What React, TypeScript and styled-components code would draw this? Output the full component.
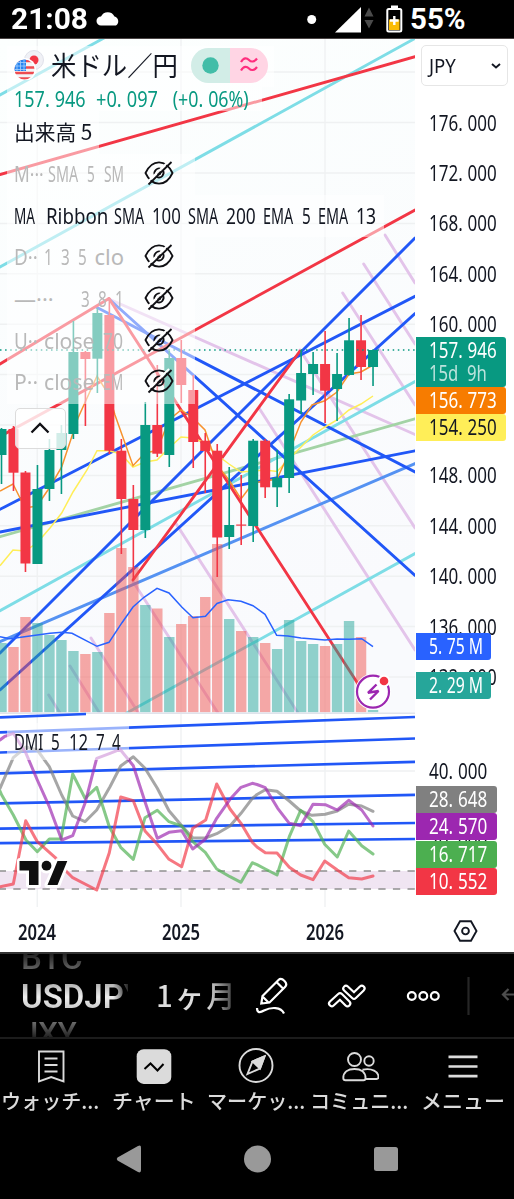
import React, { useLayoutEffect, useRef, useState } from 'react'
import styled, { createGlobalStyle } from 'styled-components'

const GlobalStyle = createGlobalStyle`
    body {
        margin: 0;
        background: #000000;
    }
    * {
        box-sizing: border-box;
    }
`;

const latin = `'Noto Sans', 'Noto Sans CJK JP', sans-serif`;
const japanese = `'Noto Sans CJK JP', sans-serif`;

/* ---------- condensed text ---------- */

const FitBox = styled.span<{ $width: number }>`
    display: inline-block;
    width: ${p => p.$width}px;
    flex-shrink: 0;
    white-space: pre;
    text-align: left;
`;

const FitInner = styled.span`
    display: inline-block;
    transform-origin: 0 50%;
`;

const Point = styled.span`
    margin-right: 0.28em;
`;

const spaced = (text: string) =>
    text.split(/(\.)(?=\d)/).map((part, i) => part === '.' ? <Point key={i}>.</Point> : part);

const Fit: React.FC<{ width: number; children: string; className?: string; raw?: boolean }> = ({ width, children, className, raw }) => {
    const ref = useRef<HTMLSpanElement>(null);
    const [scale, setScale] = useState(1);

    useLayoutEffect(() => {
        if (ref.current && ref.current.offsetWidth > 0) {
            setScale(width / ref.current.offsetWidth);
        }
    }, [width, children]);

    return (
        <FitBox $width={width} className={className}>
            <FitInner ref={ref} style={{ transform: `scaleX(${scale})` }}>{raw ? children : spaced(children)}</FitInner>
        </FitBox>
    )
}

/* ---------- layout ---------- */

const Screen = styled.div`
    display: flex;
    flex-direction: column;
    width: 514px;
    height: 1199px;
    overflow: hidden;
    background: #000000;
    font-family: ${latin};
`;

const StatusBar = styled.header`
    display: flex;
    align-items: center;
    height: 39px;
    padding: 0 48px 0 11px;
    color: #ffffff;
    font-family: Roboto, sans-serif;
    font-weight: 700;
    font-size: 29.5px;
    line-height: 38px;
    border-bottom: 1px solid #4a4444;
`;

const StatusIcons = styled.svg`
    display: block;
    margin-left: auto;
    margin-right: 7px;
`;

const Cloud = styled.svg`
    margin: 0 0 2px 8px;
`;

const ChartArea = styled.main`
    position: relative;
    display: grid;
    grid-template-columns: 415px 99px;
    grid-template-rows: 869px 44px;
    height: 913px;
    background: #ffffff;
`;

const Plot = styled.svg`
    display: block;
`;

const Legend = styled.section`
    position: absolute;
    left: 7px;
    top: 7px;
    display: flex;
    flex-direction: column;
    align-items: flex-start;
    color: #131722;
`;

const LegendRow = styled.div<{ $width: number; $height?: number; $muted?: boolean }>`
    display: flex;
    align-items: center;
    width: ${p => p.$width}px;
    height: ${p => p.$height ?? 41.7}px;
    padding: 0 0 3px 7px;
    background: rgba(255, 255, 255, 0.5);
    color: ${p => p.$muted ? '#b9b9b9' : '#131722'};
    font-size: 22px;
    line-height: 30px;
    white-space: pre;
`;

const Word = styled(Fit)<{ $gap?: number }>`
    margin-left: ${p => p.$gap ?? 9}px;
`;

const PairIcon = styled.svg`
    margin-right: 7px;
`;

const PairName = styled(Fit)`
    font-family: ${japanese};
    font-size: 27px;
    margin-top: -1px;
`;

const VolumeName = styled(Fit)`
    font-family: ${japanese};
    font-size: 21px;
`;

const Quote = styled(Fit)`
    color: #089981;
    margin-right: 10px;
`;

const Pill = styled.span`
    display: flex;
    width: 77px;
    height: 35px;
    margin-left: 13px;
    border-radius: 18px;
    overflow: hidden;
`;

const PillHalf = styled.span<{ $color: string }>`
    display: flex;
    flex: 1;
    align-items: center;
    justify-content: center;
    background: ${p => p.$color};
`;

const Eye = styled.svg`
    margin-left: auto;
    margin-right: 21px;
`;

const Collapse = styled.button`
    display: flex;
    align-items: center;
    justify-content: center;
    width: 51px;
    height: 41px;
    margin: 4px 0 0 8px;
    padding: 0 2px 0 0;
    background: rgba(255, 255, 255, 0.82);
    border: 1px solid #dcdcdc;
    border-radius: 5px;
`;

const PaneTitle = styled.div`
    position: absolute;
    left: 7px;
    top: 684px;
    display: flex;
    width: 122px;
    height: 37px;
    padding: 3px 7px;
    background: rgba(255, 255, 255, 0.55);
    color: #131722;
    font-size: 22px;
    line-height: 30px;
    white-space: pre;
`;

const Axis = styled.aside`
    position: relative;
    background: #ffffff;
    color: #131722;
    font-size: 21px;
`;

const Currency = styled.button`
    position: absolute;
    left: 6px;
    top: 6px;
    display: flex;
    align-items: center;
    justify-content: space-between;
    width: 87px;
    height: 41px;
    padding: 0 6px 0 7px;
    background: #ffffff;
    border: 1px solid #e6e6e6;
    border-radius: 5px;
    color: #131722;
    font-family: ${latin};
    font-size: 20px;
`;

const Ticks = styled.div`
    display: grid;
    grid-auto-rows: 50.4px;
    padding: 58.5px 0 0 14px;
`;

const Tick = styled.div<{ $hidden?: boolean }>`
    display: flex;
    align-items: center;
    visibility: ${p => p.$hidden ? 'hidden' : 'visible'};
`;

const PaneTick = styled.div<{ $top: number }>`
    position: absolute;
    left: 14px;
    top: ${p => p.$top}px;
    line-height: 30px;
`;

const Tag = styled.div<{ $top: number; $height?: number; $width: number; $color: string; $dark?: boolean }>`
    position: absolute;
    left: 1px;
    top: ${p => p.$top}px;
    display: flex;
    flex-direction: column;
    justify-content: center;
    width: ${p => p.$width}px;
    height: ${p => p.$height ?? 27}px;
    padding-left: 13px;
    background: ${p => p.$color};
    border-radius: 0 3px 3px 0;
    color: ${p => p.$dark ? '#131722' : '#ffffff'};
    line-height: 23px;
`;

const Countdown = styled(Fit)`
    opacity: 0.72;
`;

const TimeAxis = styled.footer`
    display: flex;
    align-items: center;
    gap: 106px;
    padding: 3px 0 0 18px;
    color: #131722;
    font-size: 21px;
    font-weight: 600;
`;

const AxisSettings = styled.div`
    display: flex;
    align-items: center;
    padding: 2px 0 0 38px;
`;

const Toolbar = styled.div`
    display: flex;
    align-items: center;
    height: 87px;
    padding-left: 21px;
    border-top: 2px solid #333333;
    border-bottom: 2px solid #1c1c1c;
    color: #ffffff;
    font-family: Roboto, sans-serif;
    font-weight: 600;
`;

const SymbolWheel = styled.div`
    display: flex;
    flex-direction: column;
    justify-content: center;
    width: 107px;
    height: 83px;
    overflow: hidden;
    -webkit-mask-image: linear-gradient(90deg, #000 92px, rgba(0, 0, 0, 0.2) 107px);
    mask-image: linear-gradient(90deg, #000 92px, rgba(0, 0, 0, 0.2) 107px);
`;

const WheelItem = styled.div<{ $colors: string; $height: number }>`
    flex-shrink: 0;
    height: ${p => p.$height}px;
    overflow: hidden;
    font-size: 33px;
    line-height: ${p => p.$height}px;
    white-space: nowrap;
    background: linear-gradient(${p => p.$colors});
    -webkit-background-clip: text;
    background-clip: text;
    color: transparent;
`;

const WheelTop = styled(WheelItem)`
    font-weight: 500;
    line-height: 7px;
`;

const WheelBottom = styled(WheelItem)`
    font-size: 31px;
    font-weight: 500;
    line-height: 28px;
`;

const Interval = styled.div`
    width: 86px;
    margin-left: 28px;
    font-family: ${japanese};
    font-size: 29.5px;
    font-weight: 500;
    letter-spacing: 2px;
    line-height: 40px;
    margin-top: -3px;
    white-space: nowrap;
    background: linear-gradient(90deg, #dddddd 60%, #333333 92%);
    -webkit-background-clip: text;
    background-clip: text;
    color: transparent;
`;

const ToolIcons = styled.svg`
    display: block;
    margin-left: auto;
`;

const Tabs = styled.nav`
    display: grid;
    grid-template-columns: repeat(5, 1fr);
    height: 81px;
`;

const TabItem = styled.a`
    display: flex;
    flex-direction: column;
    align-items: center;
    padding-top: 8px;
    color: #dbdbdb;
    font-family: ${japanese};
    font-size: 20.5px;
    font-weight: 500;
    line-height: 30px;
`;

const TabIcon = styled.svg`
    display: block;
`;

const TabLabel = styled(Fit)`
    margin-right: 2px;
`;

const SystemBar = styled.div`
    display: flex;
    flex: 1;
    justify-content: center;
    padding: 24px 0 0 2px;
`;

/* ---------- data ---------- */

const STEP = 11.985;
const FIRST = 1.5;
const at = (i: number) => FIRST + i * STEP;

// [up, top, bottom, high, low, volume top]
const candles: [number, number, number, number, number, number][] = [
    [1, 429, 455, 428, 484, 643],
    [0, 429, 472.7, 426, 491, 647],
    [0, 472.5, 563.5, 471, 572, 617],
    [1, 489, 564, 465, 564, 623],
    [1, 450, 489, 439, 501, 635],
    [1, 433, 450, 425, 494, 640],
    [1, 352, 434, 321, 439, 651],
    [0, 352, 359, 351, 426, 654],
    [1, 313, 358.7, 308, 393, 652],
    [0, 315, 450.7, 298, 454, 613],
    [0, 450.7, 499, 439, 554, 548],
    [0, 499, 530, 485, 580, 567],
    [1, 425, 530, 402, 538, 605],
    [0, 425, 453.7, 365, 457, 608.5],
    [1, 358, 455, 351, 467, 637],
    [0, 358, 385, 340, 403, 624],
    [0, 390, 442, 375, 468, 616],
    [0, 440.7, 451, 433, 493, 597],
    [0, 450.7, 537.5, 444, 577, 544],
    [1, 525, 537, 467, 549, 619],
    [0, 524.5, 525.7, 475, 545, 631],
    [1, 440.7, 526, 439, 542, 637],
    [0, 440.7, 487.3, 439, 498, 643],
    [1, 477.7, 487.3, 450, 507, 649],
    [1, 399.3, 478, 394, 493, 620],
    [1, 373, 400.5, 350, 414, 641],
    [1, 364, 374, 352, 395, 644],
    [0, 364, 390.7, 331, 423, 646],
    [1, 374, 389, 353, 421, 644],
    [1, 340.3, 375, 318, 375.5, 621],
    [0, 340.3, 367, 315, 380, 637],
    [1, 350, 367, 350, 386, 710],
];

const trends: { color: string; lines: number[][] }[] = [
    {
        color: '#e3c4ea',
        lines: [
            [109, 299, 415, 434.5], [342.7, 293, 415, 405], [363.7, 264, 415, 344], [385, 235, 415, 283],
            [300, 350, 415, 528], [259, 408, 415, 650], [175, 522, 298, 713], [133.3, 582, 218, 713],
            [91, 638, 138.5, 713], [70, 666, 99.5, 713], [48.7, 695, 60, 713],
        ],
    },
    { color: '#a3d3a5', lines: [[0, 536.7, 415, 418.8]] },
    { color: '#7edde6', lines: [[0, 95, 104, 38], [0, 267, 415, 38.4], [0, 610.7, 415, 381.5], [126.7, 713, 415, 553.5]] },
    { color: '#5592f2', lines: [[0, 641.7, 415, 463.6]] },
    {
        color: '#2157f7',
        lines: [
            [0, 509.3, 415, 296.3], [0, 532, 415, 450.8], [0, 653, 415, 238], [0, 690, 415, 313.5],
            [109, 299, 415, 575.5], [97, 307.5, 415, 472],
        ],
    },
    {
        color: '#f23645',
        lines: [
            [0, 174.5, 415, 56.7], [0, 364, 109, 298.5], [109, 298.5, 362, 690], [0, 436.5, 415, 210],
            [133, 580, 300, 351],
        ],
    },
];

const dmiLevels = [
    [0, 717.3, 86, 714], [0, 732.3, 415, 717], [0, 752.5, 415, 738.5], [0, 773.3, 415, 761.8],
    [0, 803.3, 415, 794.8], [0, 828.7, 415, 823], [0, 843.2, 415, 839],
];

const orangeLine = '0,491 13,484 25,508 37,506 50,487 61.7,467 78,418 97,376 109,395 115,415 133,465.7 145,453 157,450.5 169,420 181,410 193,418 205,430 217,465 229,480 241,499 253,483 265,481 277,479 288,455 301,422 312,405 325,400.7 337,392 349,374 361,372 373,365';
const yellowLine = '0,565.7 13,550 25,551 37,543 50,528 61.7,513 73,492 87,470 97,450.7 109,450.7 121,454 133,467 145,462 157,460 169,448 181,437 193,438 205,443 217,455 229,464 241,472 265,470 277,471.5 288,460 301,447 313,435 325,427 337,420 349,410 361,404 373,396';
const volumeLine = '0,636.7 10,638.7 50,633.3 62,632.3 72,633.3 97,646.3 109,642.3 122,622.7 133,607 144,597.3 157,588.3 169,593 182,607.3 193,617.7 205.5,616.3 217,603.5 228,599.7 241,601.3 253,605.7 265,614.3 276.7,635.3 288,636 301,638 325,640 337,639 349,639.3 361.7,638.7 373,646.7';

const adx = '0,740 4.3,736.7 13.3,733.3 26,753.3 37.3,780 49.3,806.7 61.7,840 72.7,835.7 85,803.3 96.7,758.3 110,753.3 120,749.3 133.3,765.7 145,801.7 157.3,838.3 169,832.3 181.7,830.7 192.7,849 205.3,839.3 216.7,818.3 230,799.3 241,787.3 252.3,783.3 257,784.5 265.3,787.7 277.7,808.3 289.3,823.3 300.7,825.7 313,804.3 325.3,804.7 337.3,810 348.7,800.3 361.7,810 373,826';
const adxr = '0,788.3 13.3,757.7 26,747 37.3,750 49.3,766.7 61.7,795 72.7,816 85,821.7 96.7,810 110,786.7 120.7,766 133.3,756.7 145,768.3 157.3,788.3 169,810.7 181.7,825.7 192.7,837.7 205.3,838 216.7,833.7 230,826 241,813.3 252.3,798.3 257,794.5 265.3,789.7 277,791.3 289.3,801 300.7,811 312,815.3 325.3,814.3 337.3,811 348.7,804.3 361.7,806 373,811.3';
const plusDi = '0,791 1.7,795 13.3,815 26,840 37.3,851.7 49.3,839 61,839 72.7,774 85,798.3 96.7,787.3 109.3,826.7 120.7,847.3 133.3,859.3 145,817.7 157.3,810.3 169,821.7 181.7,826 192.7,841.7 205.3,852.3 216.7,869 230,876.7 241,882.3 252.3,862.7 257,864.7 265.3,869 277,875 289.3,836.7 300.7,810.3 313,821.7 324.7,844.3 337.3,857 348.7,831 361.7,845.7 373,854';
const minusDi = '0,886.7 13.3,884 25.7,820.7 37.3,841.7 55,857.3 66.7,871.7 72.7,877.7 85,884 96.7,890 109.3,852.7 120.7,797 133.3,800.7 145,831 157.3,844.3 169,859.3 181.7,866.7 192.7,828.3 205.7,820 216.7,784 230,809 241,823.3 252.3,842.3 257,847 265.3,852.7 277,853 289.3,867.3 300.7,875 313,879.7 324.7,861 337.3,870 348.7,877.7 361.7,879 373,876';

const prices = [176, 172, 168, 164, 160, 156, 152, 148, 144, 140, 136, 132];

/* ---------- pieces ---------- */

const HiddenEye = () => (
    <Eye width="30" height="26" viewBox="0 0 30 26" fill="none" stroke="#101014" strokeWidth="1.8">
        <path d="M1.5 13C5 5.5 9.500 2.300 15 2.300S25 5.500 28.500 13C25 20.500 20.500 23.700 15 23.700S5 20.500 1.500 13Z" />
        <path d="M11 15.500a4.700 4.700 0 0 1 6.500-6.300M19 10.500a4.700 4.700 0 0 1-6.300 6.400" />
        <circle cx="15" cy="13" r="1.300" />
        <path d="M3 22.500L25 1" stroke="#ffffff" strokeWidth="2" />
        <path d="M4.500 24.500L27.500 2" />
    </Eye>
)

const ChartPlot = () => (
    <Plot width="415" height="869" viewBox="0 39 415 869">
        <defs>
            <linearGradient id="bg" x1="0" y1="0" x2="0.3" y2="1">
                <stop offset="0" stopColor="#fcfffe" />
                <stop offset="1" stopColor="#f9fafd" />
            </linearGradient>
            <clipPath id="pane"><rect x="0" y="39" width="415" height="673.500" /></clipPath>
        </defs>
        <rect x="0" y="39" width="415" height="674" fill="url(#bg)" />
        {[37.3, 181, 325].map(x => <path key={x} d={`M${x} 39V907`} stroke="#f0f2f3" strokeWidth="1.5" />)}
        {[72, ...prices.map((_, i) => 122.6 + i * 50.4), 771].map(y => <path key={y} d={`M0 ${y}H415`} stroke="#eff1f2" strokeWidth="1.5" />)}

        <g clipPath="url(#pane)">
            {trends.map(group => group.lines.map(([x1, y1, x2, y2]) => (
                <line key={`${x1}-${y1}-${y2}`} x1={x1} y1={y1} x2={x2} y2={y2} stroke={group.color} strokeWidth="2.9" strokeLinecap="round" />
            )))}
            {candles.map(([up, , , , , vol], i) => (
                <rect key={i} x={at(i) - 5.2} y={vol} width="10.4" height={712.5 - vol} fill={up ? '#26a69a' : '#ef5350'} opacity="0.5" />
            ))}
            <polyline points={volumeLine} fill="none" stroke="#2962ff" strokeWidth="1.5" />
            <polyline points={yellowLine} fill="none" stroke="#ffee58" strokeWidth="1.5" />
            <polyline points={orangeLine} fill="none" stroke="#f7922e" strokeWidth="1.5" />
            {candles.map(([up, top, bottom, high, low], i) => (
                <g key={i} fill={up ? '#089981' : '#f23645'}>
                    <rect x={at(i) - 0.8} y={high} width="1.6" height={low - high} />
                    <rect x={at(i) - 5} y={top} width="10" height={bottom - top} />
                </g>
            ))}
        </g>
        <path d="M0 350H415" stroke="#089981" strokeWidth="1.3" strokeDasharray="1.5 3.6" />

        <circle cx="373" cy="691.700" r="18" fill="#ffffff" />
        <circle cx="373" cy="691.700" r="16" fill="none" stroke="#9c27b0" strokeWidth="2.200" />
        <path d="M376.500 684.500L368 692.800L378.500 691L370 699.500" fill="none" stroke="#9c27b0" strokeWidth="2.400" strokeLinejoin="bevel" />
        <circle cx="384" cy="681" r="6.200" fill="#ffffff" />
        <circle cx="384" cy="681" r="4.300" fill="#f23645" />

        <rect x="0" y="712.500" width="415" height="1.500" fill="#e0e3eb" />
        {dmiLevels.map(([x1, y1, x2, y2]) => <line key={y1} x1={x1} y1={y1} x2={x2} y2={y2} stroke="#2157f7" strokeWidth="2.700" />)}
        <rect x="0" y="871" width="415" height="18" fill="#f0e5f2" />
        <path d="M0 871H415M0 889H415" stroke="#909090" strokeWidth="1.500" strokeDasharray="7.300 7.300" strokeDashoffset="1.300" />
        <g fill="none" strokeWidth="3" strokeLinejoin="round" strokeLinecap="round">
            <polyline points={adxr} stroke="#808080" opacity="0.7" />
            <polyline points={plusDi} stroke="#4caf50" opacity="0.68" />
            <polyline points={minusDi} stroke="#f23645" opacity="0.68" />
            <polyline points={adx} stroke="#9c27b0" opacity="0.68" />
        </g>
        <g stroke="#ffffff" strokeWidth="6" strokeLinejoin="round" fill="#ffffff">
            <path d="M20 861H38V885H29V870.500H20ZM58 861H67L57.500 885H47.500Z" />
            <circle cx="46.500" cy="865.700" r="4.700" />
        </g>
        <g fill="#0f0f0f">
            <path d="M19.500 861H38.500V885H29V870.500H19.500ZM57.500 861H67.300L57.500 885H47.500Z" />
            <circle cx="46.500" cy="865.700" r="4.900" />
        </g>
    </Plot>
)

const UnitedStatesJapan = () => (
    <PairIcon width="30" height="30" viewBox="0 0 30 30">
        <circle cx="20" cy="10" r="9.500" fill="#f0f1f6" stroke="#dfe1ea" />
        <circle cx="20" cy="10" r="4.500" fill="#f23645" />
        <circle cx="10.500" cy="19.500" r="11.500" fill="#ffffff" />
        <clipPath id="us"><circle cx="10.500" cy="19.500" r="10" /></clipPath>
        <g clipPath="url(#us)">
            <rect width="21" height="30" fill="#f4f4f6" />
            <path d="M0 11H21M0 17.500H21M0 23H21M0 28.500H21" stroke="#ee4b51" strokeWidth="2.700" />
            <rect y="9" width="12" height="12" fill="#2684f0" />
            <path d="M0 12.500H12M0 16H12M0 19.500H12M3 9V21M6.500 9V21M10 9V21" stroke="#a8d0fb" strokeWidth="0.800" />
        </g>
    </PairIcon>
)

const App: React.FC = () => {
  return (
    <>
        <GlobalStyle />
        <Screen>
            <StatusBar>
                <Fit width={77}>21:08</Fit>
                <Cloud width="26" height="18" viewBox="0 0 26 18">
                    <path d="M5 16.500A4.500 4.500 0 0 1 5 7.500A7.500 7.500 0 0 1 18.500 7.500A5 5 0 0 1 20 16.500Z" fill="#ffffff" />
                </Cloud>
                <StatusIcons width="97" height="36" viewBox="306 1 97 36">
                    <circle cx="311.700" cy="19.500" r="4.500" fill="#ffffff" />
                    <path d="M335 32.500L361 7V32.500Z" fill="#ffffff" />
                    <path d="M364.500 16.500L369 7.500L373.500 16.500ZM364.500 20L369 28.500L373.500 20Z" fill="#4b4b4b" />
                    <rect x="391" y="5.500" width="7" height="4" fill="#ffffff" />
                    <rect x="387.300" y="9" width="14" height="22.500" rx="1.500" fill="#000000" stroke="#ffffff" strokeWidth="2" />
                    <rect x="389" y="19.500" width="10.600" height="10.500" fill="#fbbc04" />
                    <path d="M394.300 16V25M390 20.500H398.600" stroke="#ffffff" strokeWidth="2.400" />
                </StatusIcons>
                <Fit width={56}>55%</Fit>
            </StatusBar>

            <ChartArea>
                <ChartPlot />
                <Axis>
                    <Ticks>
                        {prices.map(price => (
                            <Tick key={price} $hidden={price === 156 || price === 152}>
                                <Fit width={68}>{`${price}.000`}</Fit>
                            </Tick>
                        ))}
                    </Ticks>
                    <Currency>
                        <Fit width={27}>JPY</Fit>
                        <svg width="10" height="6" viewBox="0 0 10 6" fill="none" stroke="#131722" strokeWidth="1.900"><path d="M1 1L5 4.500L9 1" /></svg>
                    </Currency>
                    <PaneTick $top={717}><Fit width={58.5}>40.000</Fit></PaneTick>
                    <PaneTick $top={787}><Fit width={58.5}>20.000</Fit></PaneTick>
                    <Tag $top={297.5} $height={50} $width={90} $color="#089981">
                        <Fit width={68}>157.946</Fit>
                        <Countdown width={58}>15d  9h</Countdown>
                    </Tag>
                    <Tag $top={347.5} $width={90} $color="#f77c00"><Fit width={68}>156.773</Fit></Tag>
                    <Tag $top={374.5} $width={90} $color="#ffee58" $dark><Fit width={68}>154.250</Fit></Tag>
                    <Tag $top={594} $width={75} $color="#2962ff"><Fit width={54}>5.75 M</Fit></Tag>
                    <Tag $top={633} $width={75} $color="#26a69a"><Fit width={54}>2.29 M</Fit></Tag>
                    <Tag $top={746.5} $width={81} $color="#808080"><Fit width={58.5}>28.648</Fit></Tag>
                    <Tag $top={773.5} $width={81} $color="#9c27b0"><Fit width={58.5}>24.570</Fit></Tag>
                    <Tag $top={801.8} $width={81} $color="#4caf50"><Fit width={58.5}>16.717</Fit></Tag>
                    <Tag $top={829} $width={81} $color="#f23645"><Fit width={58.5}>10.552</Fit></Tag>
                </Axis>
                <TimeAxis>
                    <Fit width={38}>2024</Fit>
                    <Fit width={38}>2025</Fit>
                    <Fit width={38}>2026</Fit>
                </TimeAxis>
                <AxisSettings>
                    <svg width="25" height="22" viewBox="0 0 25 22" fill="none" stroke="#131722" strokeWidth="1.900">
                        <path d="M7 1.300H18L23.500 11L18 20.700H7L1.500 11Z" />
                        <circle cx="12.500" cy="11" r="3.400" />
                    </svg>
                </AxisSettings>

                <Legend>
                    <LegendRow $width={267} $height={41}>
                        <UnitedStatesJapan />
                        <PairName width={127}>米ドル／円</PairName>
                        <Pill>
                            <PillHalf $color="#d2ede7"><svg width="17" height="17"><circle cx="8.500" cy="8.500" r="8.200" fill="#42bda8" /></svg></PillHalf>
                            <PillHalf $color="#ffd5e4">
                                <svg width="18" height="16" viewBox="0 0 18 16" fill="none" stroke="#ff2e7e" strokeWidth="2.200"><path d="M1 5C4 0 7 1 9 3S14 5.500 17 1.500M1 13.500C4 8.500 7 9.500 9 11.500S14 14 17 10" /></svg>
                            </PillHalf>
                        </Pill>
                    </LegendRow>
                    <LegendRow $width={255} $height={24}>
                        <Quote width={72}>157.946</Quote>
                        <Quote width={62}>+0.097</Quote>
                        <Quote width={81}> (+0.06%)</Quote>
                    </LegendRow>
                    <LegendRow $width={92} $height={42.5}>
                        <VolumeName width={78}>出来高 5</VolumeName>
                    </LegendRow>
                    <LegendRow $width={188} $muted>
                        <Word $gap={0} width={30}>M···</Word>
                        <Word $gap={4} width={30}>SMA</Word>
                        <Word width={8}>5</Word>
                        <Word width={20}>SM</Word>
                        <HiddenEye />
                    </LegendRow>
                    <LegendRow $width={377}>
                        <Word $gap={0} width={21}>MA</Word>
                        <Word $gap={11} width={62}>Ribbon</Word>
                        <Word $gap={6} width={30}>SMA</Word>
                        <Word $gap={8} width={29}>100</Word>
                        <Word $gap={7} width={30}>SMA</Word>
                        <Word $gap={8} width={30}>200</Word>
                        <Word $gap={7} width={30}>EMA</Word>
                        <Word $gap={8.5} width={9}>5</Word>
                        <Word $gap={7} width={30}>EMA</Word>
                        <Word $gap={8} width={20}>13</Word>
                    </LegendRow>
                    <LegendRow $width={188} $muted>
                        <Word $gap={0} width={24}>D··</Word>
                        <Word $gap={6} width={9}>1</Word>
                        <Word $gap={7.5} width={9}>3</Word>
                        <Word $gap={8} width={9}>5</Word>
                        <Word $gap={8} width={30}>clo</Word>
                        <HiddenEye />
                    </LegendRow>
                    <LegendRow $width={188} $muted>
                        <Word $gap={0} width={40}>—···</Word>
                        <Word $gap={27} width={9}>3</Word>
                        <Word $gap={8} width={9}>8</Word>
                        <Word $gap={8} width={9}>1</Word>
                        <HiddenEye />
                    </LegendRow>
                    <LegendRow $width={188} $muted>
                        <Word $gap={0} width={24}>U··</Word>
                        <Word $gap={6} width={51}>close</Word>
                        <Word $gap={8} width={20}>70</Word>
                        <HiddenEye />
                    </LegendRow>
                    <LegendRow $width={188} $muted>
                        <Word $gap={0} width={24}>P··</Word>
                        <Word $gap={6} width={51}>close</Word>
                        <Word $gap={8} width={20}>EM</Word>
                        <HiddenEye />
                    </LegendRow>
                    <Collapse>
                        <svg width="20" height="12" viewBox="0 0 20 12" fill="none" stroke="#101014" strokeWidth="2.300"><path d="M1.500 10.500L10 2L18.500 10.500" /></svg>
                    </Collapse>
                </Legend>
                <PaneTitle>
                    <Word $gap={0} width={29}>DMI</Word>
                    <Word $gap={8} width={9}>5</Word>
                    <Word $gap={8.5} width={19}>12</Word>
                    <Word $gap={8.5} width={9}>7</Word>
                    <Word $gap={7} width={9}>4</Word>
                </PaneTitle>
            </ChartArea>

            <Toolbar>
                <SymbolWheel>
                    <WheelTop $colors="#222222, #777777" $height={20}>BTC</WheelTop>
                    <WheelItem $colors="#888888, #eeeeee, #aaaaaa" $height={46}>USDJPY</WheelItem>
                    <WheelBottom $colors="#777777, #222222" $height={17}>JXY</WheelBottom>
                </SymbolWheel>
                <Interval>1ヶ月</Interval>
                <ToolIcons width="270" height="83" viewBox="244 954 270 83" fill="none" stroke="#ffffff" strokeWidth="2.200">
                    <path d="M261.300 1003.500L262.500 996L278.500 980C280.500 978 283 979.500 284.500 981C286 982.500 287 985 285 987L269.500 1002.500ZM263 997L269 1003M276.500 982L283 988.500M257 1008C257 1013 260 1013 264 1010.500C271 1007 281 1006.500 284 1013.500" />
                    <g strokeLinecap="round" strokeLinejoin="round">
                        <path d="M331.800 1003.500L340 996L347.500 1003.500M346 988.500L354 996L361.800 988.500" strokeWidth="7.600" />
                        <path d="M331.800 1003.500L340 996L347.500 1003.500M346 988.500L354 996L361.800 988.500" stroke="#000000" strokeWidth="3.300" />
                    </g>
                    <circle cx="411.800" cy="996" r="3.900" /><circle cx="423.300" cy="996" r="3.900" /><circle cx="434.800" cy="996" r="3.900" />
                    <path d="M468.500 977V1015" stroke="#262626" />
                    <path d="M503 994.500H514M508.500 989L503 994.500L508.500 1000" stroke="#4d4d4d" />
                </ToolIcons>
            </Toolbar>

            <Tabs>
                <TabItem>
                    <TabIcon width="38" height="38" viewBox="0 0 38 38" fill="none" stroke="#dbdbdb" strokeWidth="1.900">
                        <path d="M7 4.500H31.500V34.500L19.200 30L7 34.500ZM12.500 11.500H25.500M12.500 18H25.500M12.500 24.500H25.500" />
                    </TabIcon>
                    <TabLabel raw width={98}>ウォッチ...</TabLabel>
                </TabItem>
                <TabItem>
                    <TabIcon width="38" height="38" viewBox="0 0 38 38" fill="none">
                        <rect x="1.700" y="2.300" width="34.600" height="34.600" rx="7" fill="#dbdbdb" />
                        <path d="M9.500 22L15.500 16.500L22.500 23.500L28.500 17" stroke="#000000" strokeWidth="2" />
                    </TabIcon>
                    <Fit raw width={84}>チャート</Fit>
                </TabItem>
                <TabItem>
                    <TabIcon width="38" height="38" viewBox="0 0 38 38" fill="none" stroke="#dbdbdb" strokeWidth="1.900">
                        <circle cx="18" cy="18.500" r="16.500" />
                        <path d="M26.500 9.500L14.500 14.500L9.500 27L22 21.500Z" />
                        <path d="M26.500 9.500L14.500 14.500L22 21.500Z" fill="#dbdbdb" />
                    </TabIcon>
                    <TabLabel raw width={98}>マーケッ...</TabLabel>
                </TabItem>
                <TabItem>
                    <TabIcon width="38" height="38" viewBox="0 0 38 38" fill="none" stroke="#dbdbdb" strokeWidth="1.900">
                        <circle cx="13.500" cy="12.500" r="6.500" />
                        <circle cx="28" cy="14" r="4.700" />
                        <path d="M2.300 31C2.300 25 7 22 13.500 22S24.500 25 24.500 31C24.500 32.500 24 33.300 22.500 33.300H4.500C3 33.300 2.300 32.500 2.300 31ZM21.500 22.700C31 20.500 37.500 25 37.500 30C37.500 31.500 37 32 35.500 32H24.500" />
                    </TabIcon>
                    <TabLabel raw width={98}>コミュニ...</TabLabel>
                </TabItem>
                <TabItem>
                    <TabIcon width="38" height="38" viewBox="0 0 38 38" stroke="#dbdbdb" strokeWidth="2.700">
                        <path d="M4.500 9.800H33.500M4.500 19.500H33.500M4.500 29.200H33.500" />
                    </TabIcon>
                    <Fit raw width={84}>メニュー</Fit>
                </TabItem>
            </Tabs>

            <SystemBar>
                <svg width="284" height="30" viewBox="116 1144 284 30" fill="#999999">
                    <path d="M117.500 1157.500L138 1146Q141 1144.500 141 1147.500V1170Q141 1173.500 138 1172L117.500 1160.500Q116 1159 117.500 1157.500Z" />
                    <circle cx="257.500" cy="1159" r="13.500" />
                    <rect x="374" y="1147" width="24" height="24" rx="2.500" />
                </svg>
            </SystemBar>
        </Screen>
    </>
)
}

export default App
